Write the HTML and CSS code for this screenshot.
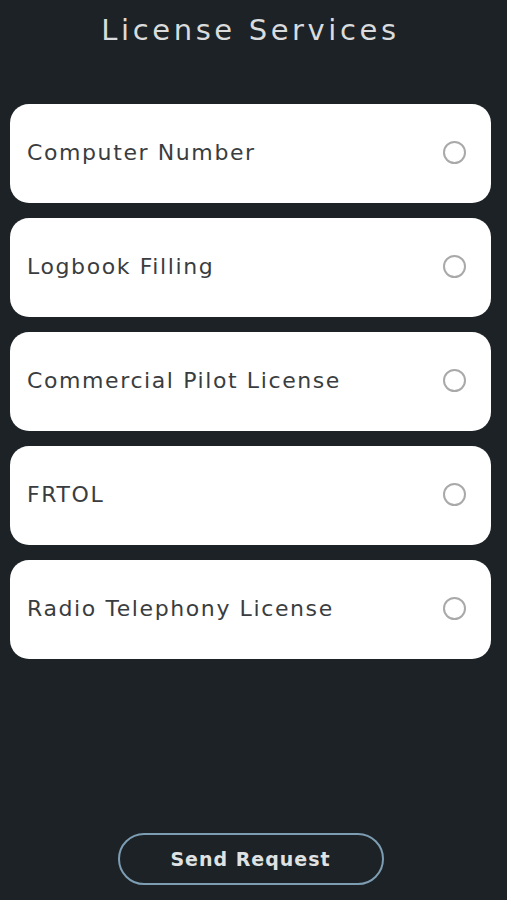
FILE: index.html
```html
<!DOCTYPE html>
<html lang="en">
<head>
    <meta charset="UTF-8">
    <meta name="viewport" content="width=device-width, initial-scale=1.0">
    <title>License Services</title>
    <link rel="stylesheet" href="styles.css">
</head>
<body>
    <div class="screen">
        <h1 class="title">License Services</h1>

        <div class="service-list">
            <label class="service-card">
                <span class="service-name">Computer Number</span>
                <span class="radio"></span>
            </label>
            <label class="service-card">
                <span class="service-name">Logbook Filling</span>
                <span class="radio"></span>
            </label>
            <label class="service-card">
                <span class="service-name">Commercial Pilot License</span>
                <span class="radio"></span>
            </label>
            <label class="service-card">
                <span class="service-name">FRTOL</span>
                <span class="radio"></span>
            </label>
            <label class="service-card">
                <span class="service-name">Radio Telephony License</span>
                <span class="radio"></span>
            </label>
        </div>

        <div class="actions">
            <button class="send-btn">Send Request</button>
        </div>
    </div>
</body>
</html>
```

FILE: styles.css
```css
* {
    box-sizing: border-box;
}
html, body {
    margin: 0;
    padding: 0;
    height: 100%;
}
body {
    background: #1c2225;
    font-family: "DejaVu Sans", "Noto Sans", sans-serif;
}
.screen {
    height: 900px;
    display: flex;
    flex-direction: column;
    padding: 0 16px 0 10px;
}
.title {
    margin: 13px 0 0;
    height: 39px;
    text-align: center;
    font-size: 29px;
    font-weight: normal;
    color: #d9dbdc;
    letter-spacing: 3.6px;
}
.service-list {
    margin-top: 52px;
    display: flex;
    flex-direction: column;
    gap: 15px;
}
.service-card {
    height: 99px;
    background: #fff;
    border-radius: 19px;
    display: flex;
    align-items: center;
    justify-content: space-between;
    padding: 0 25px 2px 17px;
}
.service-name {
    font-size: 22px;
    color: #3a3d40;
    letter-spacing: 1.6px;
}
.radio {
    width: 23px;
    height: 23px;
    border: 2px solid #a9a9a9;
    border-radius: 50%;
}
.actions {
    margin-top: auto;
    padding-bottom: 15px;
    display: flex;
    justify-content: center;
}
.send-btn {
    width: 266px;
    height: 52px;
    background: transparent;
    border: 2px solid #7d9db3;
    border-radius: 26px;
    color: #dfe1e2;
    font-family: inherit;
    font-size: 19px;
    font-weight: bold;
    letter-spacing: 1px;
}
```
